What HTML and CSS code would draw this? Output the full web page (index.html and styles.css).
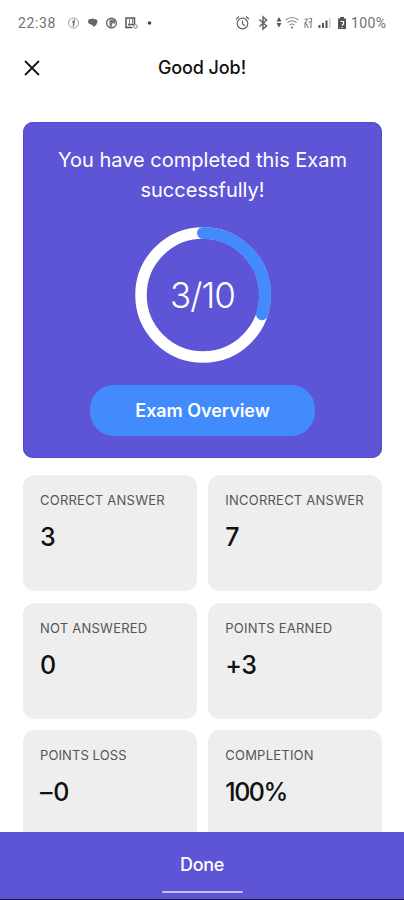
FILE: index.html
```html
<!DOCTYPE html>
<html lang="en">
<head>
<meta charset="utf-8">
<meta name="viewport" content="width=device-width, initial-scale=1">
<title>Good Job!</title>
<link rel="stylesheet" href="styles.css">
</head>
<body>
<div class="screen">
  <header class="status">
    <div class="status-left">
      <span class="clock">22:38</span>
      <svg class="notices" width="86" height="16" viewBox="0 0 86 16">
        <circle cx="7.500" cy="8" r="5" fill="none" stroke="#999" stroke-width="1"/>
        <path d="M8.500 4.500L7.300 11.500M6 7h2.500" stroke="#777" stroke-width="1.500" fill="none"/>
        <path d="M22 6q0-2 2.500-2 2-.8 4 0 3 0 3 3-.5 3-4 5-.5-2.500-2.500-2.500-3-.5-3-3.500z" fill="#666"/>
        <circle cx="45.500" cy="8" r="4.800" fill="none" stroke="#666" stroke-width="1.400"/>
        <path d="M43.500 4.500h5.500v4h-3v3h-2.500z" fill="#777"/>
        <path d="M60 2.800v10M68.500 2.800v6.500M59.300 3h9.900M59.300 12.500h7M62 9.500h6" fill="none" stroke="#555" stroke-width="1.500"/>
        <path d="M62.500 3.500h1v8M66.500 3.500v5" fill="none" stroke="#888" stroke-width="1"/>
        <circle cx="69.500" cy="11.500" r="1.800" fill="#fff" stroke="#777"/>
        <circle cx="83.500" cy="8" r="1.800" fill="#444"/>
      </svg>
    </div>
    <div class="status-right">
      <svg class="signals" width="112" height="16" viewBox="0 0 112 16">
        <g fill="none" stroke="#666" stroke-width="1.200">
          <circle cx="7.500" cy="8.500" r="5.300"/><path d="M7.500 5.500v3.500l2.300 1.700M1 4.200l3-2.700M11 1.500l3 2.700"/>
          <path d="M24.500 4.500l7 6.500-3.500 3V2l3.500 3-7 6.500" stroke-width="1.500"/>
        </g>
        <path d="M44 2l2.500 4.500h-5zM44 12.500L46.500 8h-5z" fill="#555"/>
        <g fill="none" stroke="#888" stroke-width="1.100">
          <path d="M50.500 5q6.500-5 13 0M52.500 7.500q4.500-3.500 9 0M54.500 10q2.500-2 5 0"/>
          <path d="M57 11.500v2" stroke-width="2"/>
          <path d="M70 13V7.500M69.500 4h3l-2 3.500 3 5.500M74 3.500h2.500v3l-3 1M76 7.500V13" stroke-width="1.200"/>
        </g>
        <path d="M83.500 10h2v3h-2zM87 8h2v5h-2zM90.500 5.500h2V13h-2z" fill="#555"/>
        <path d="M94 3h1.500v10H94z" fill="#ccc"/>
        <path d="M105 2h4v1.500h2V14h-8V3.500h2z" fill="#555"/>
        <path d="M105.500 6.500h3v2.500L107 10.500M107 12v1" stroke="#fff" fill="none" stroke-width="1.200"/>
      </svg>
      <span class="charge">100%</span>
    </div>
  </header>
  <nav class="bar">
    <svg class="close" width="18" height="18" viewBox="0 0 18 18"><path d="M2 2l14 14M16 2L2 16" stroke="#151515" stroke-width="1.800" fill="none"/></svg>
    <h1 class="title">Good Job!</h1>
  </nav>
  <main class="content">
    <section class="result">
      <p class="message">You have completed this Exam<br>successfully!</p>
      <div class="ring">
        <svg width="136" height="136" viewBox="0 0 136 136">
          <circle cx="68" cy="68" r="62" fill="none" stroke="#fff" stroke-width="11.500"/>
          <path d="M68 6A62 62 0 0 1 127 87.200" fill="none" stroke="#418bfc" stroke-width="12" stroke-linecap="round"/>
        </svg>
        <span class="score">3/10</span>
      </div>
      <button class="overview">Exam Overview</button>
    </section>
    <section class="stats">
      <div class="stat"><span class="label">CORRECT ANSWER</span><strong class="value">3</strong></div>
      <div class="stat"><span class="label">INCORRECT ANSWER</span><strong class="value">7</strong></div>
      <div class="stat"><span class="label">NOT ANSWERED</span><strong class="value">0</strong></div>
      <div class="stat"><span class="label">POINTS EARNED</span><strong class="value">+3</strong></div>
      <div class="stat"><span class="label loss">POINTS LOSS</span><strong class="value minus">–0</strong></div>
      <div class="stat"><span class="label">COMPLETION</span><strong class="value percent">100%</strong></div>
    </section>
  </main>
  <footer class="done"><span class="done-text">Done</span><i class="handle"></i></footer>
</div>
</body>
</html>
```
FILE: styles.css
```css
* { box-sizing: border-box; }
body { margin: 0; background: #fff; font-family: Inter, "Liberation Sans", sans-serif; color: #111; }
.screen { width: 404px; height: 900px; display: flex; flex-direction: column; overflow: hidden; background: #fff; }
.status { flex: none; height: 45px; padding: 15px 17px 0 18px; display: flex; justify-content: space-between; font-family: Roboto, sans-serif; font-size: 14px; line-height: 17px; color: #707070; }
.status-left, .status-right { display: flex; }
.clock { width: 38px; letter-spacing: .6px; }
.notices { margin-left: 10px; }
.charge { width: 36px; margin-left: 4px; letter-spacing: .4px; }
.bar { flex: none; height: 77px; padding: 12px 23px; display: grid; grid-template-columns: 18px 1fr 18px; align-items: start; }
.close { margin-top: 2px; }
.title { margin: 0; font-size: 18px; line-height: 22px; font-weight: 500; text-align: center; letter-spacing: -.1px; }
.content { flex: 1; min-height: 0; padding: 0 22px 0 23px; overflow: hidden; }
.result { height: 336px; padding-top: 23px; border-radius: 10px; background: #5e54d6; box-shadow: inset 0 0 0 1px #554aca; display: flex; flex-direction: column; align-items: center; color: #fff; }
.message { margin: 0; font-size: 20px; line-height: 30px; text-align: center; white-space: nowrap; }
.ring { width: 136px; height: 136px; margin-top: 22px; display: grid; place-items: center; }
.ring > * { grid-area: 1 / 1; }
.score { font-size: 35px; font-weight: 300; line-height: 40px; letter-spacing: -1px; }
.overview { width: 225px; height: 51px; margin-top: 22px; padding: 0; border: 0; border-radius: 24px; background: #418bfc; color: #fff; font: 600 18px/51px Inter, sans-serif; letter-spacing: -.05px; }
.stats { margin-top: 17px; display: grid; grid-template-columns: 1fr 1fr; grid-auto-rows: 116px; gap: 11.500px; }
.stat { padding: 16px 17px; border-radius: 12px; background: #eee; display: flex; flex-direction: column; }
.label { font-size: 13px; line-height: 19px; letter-spacing: .23px; color: #555; white-space: nowrap; }
.loss { letter-spacing: .1px; }
.value { margin-top: 11px; font-size: 25px; line-height: 32px; font-weight: 500; letter-spacing: -.4px; }
.percent { letter-spacing: -1.500px; }
.minus { letter-spacing: .8px; }
.done { flex: none; height: 68px; padding-top: 21px; background: #5e54d6; border-bottom: 1px solid #201b48; color: #fff; display: flex; flex-direction: column; align-items: center; }
.done-text { font-size: 18px; line-height: 24px; font-weight: 500; letter-spacing: -.3px; }
.handle { width: 81px; height: 2px; margin-top: 14px; border-radius: 1px; background: #c9bff5; }
```
